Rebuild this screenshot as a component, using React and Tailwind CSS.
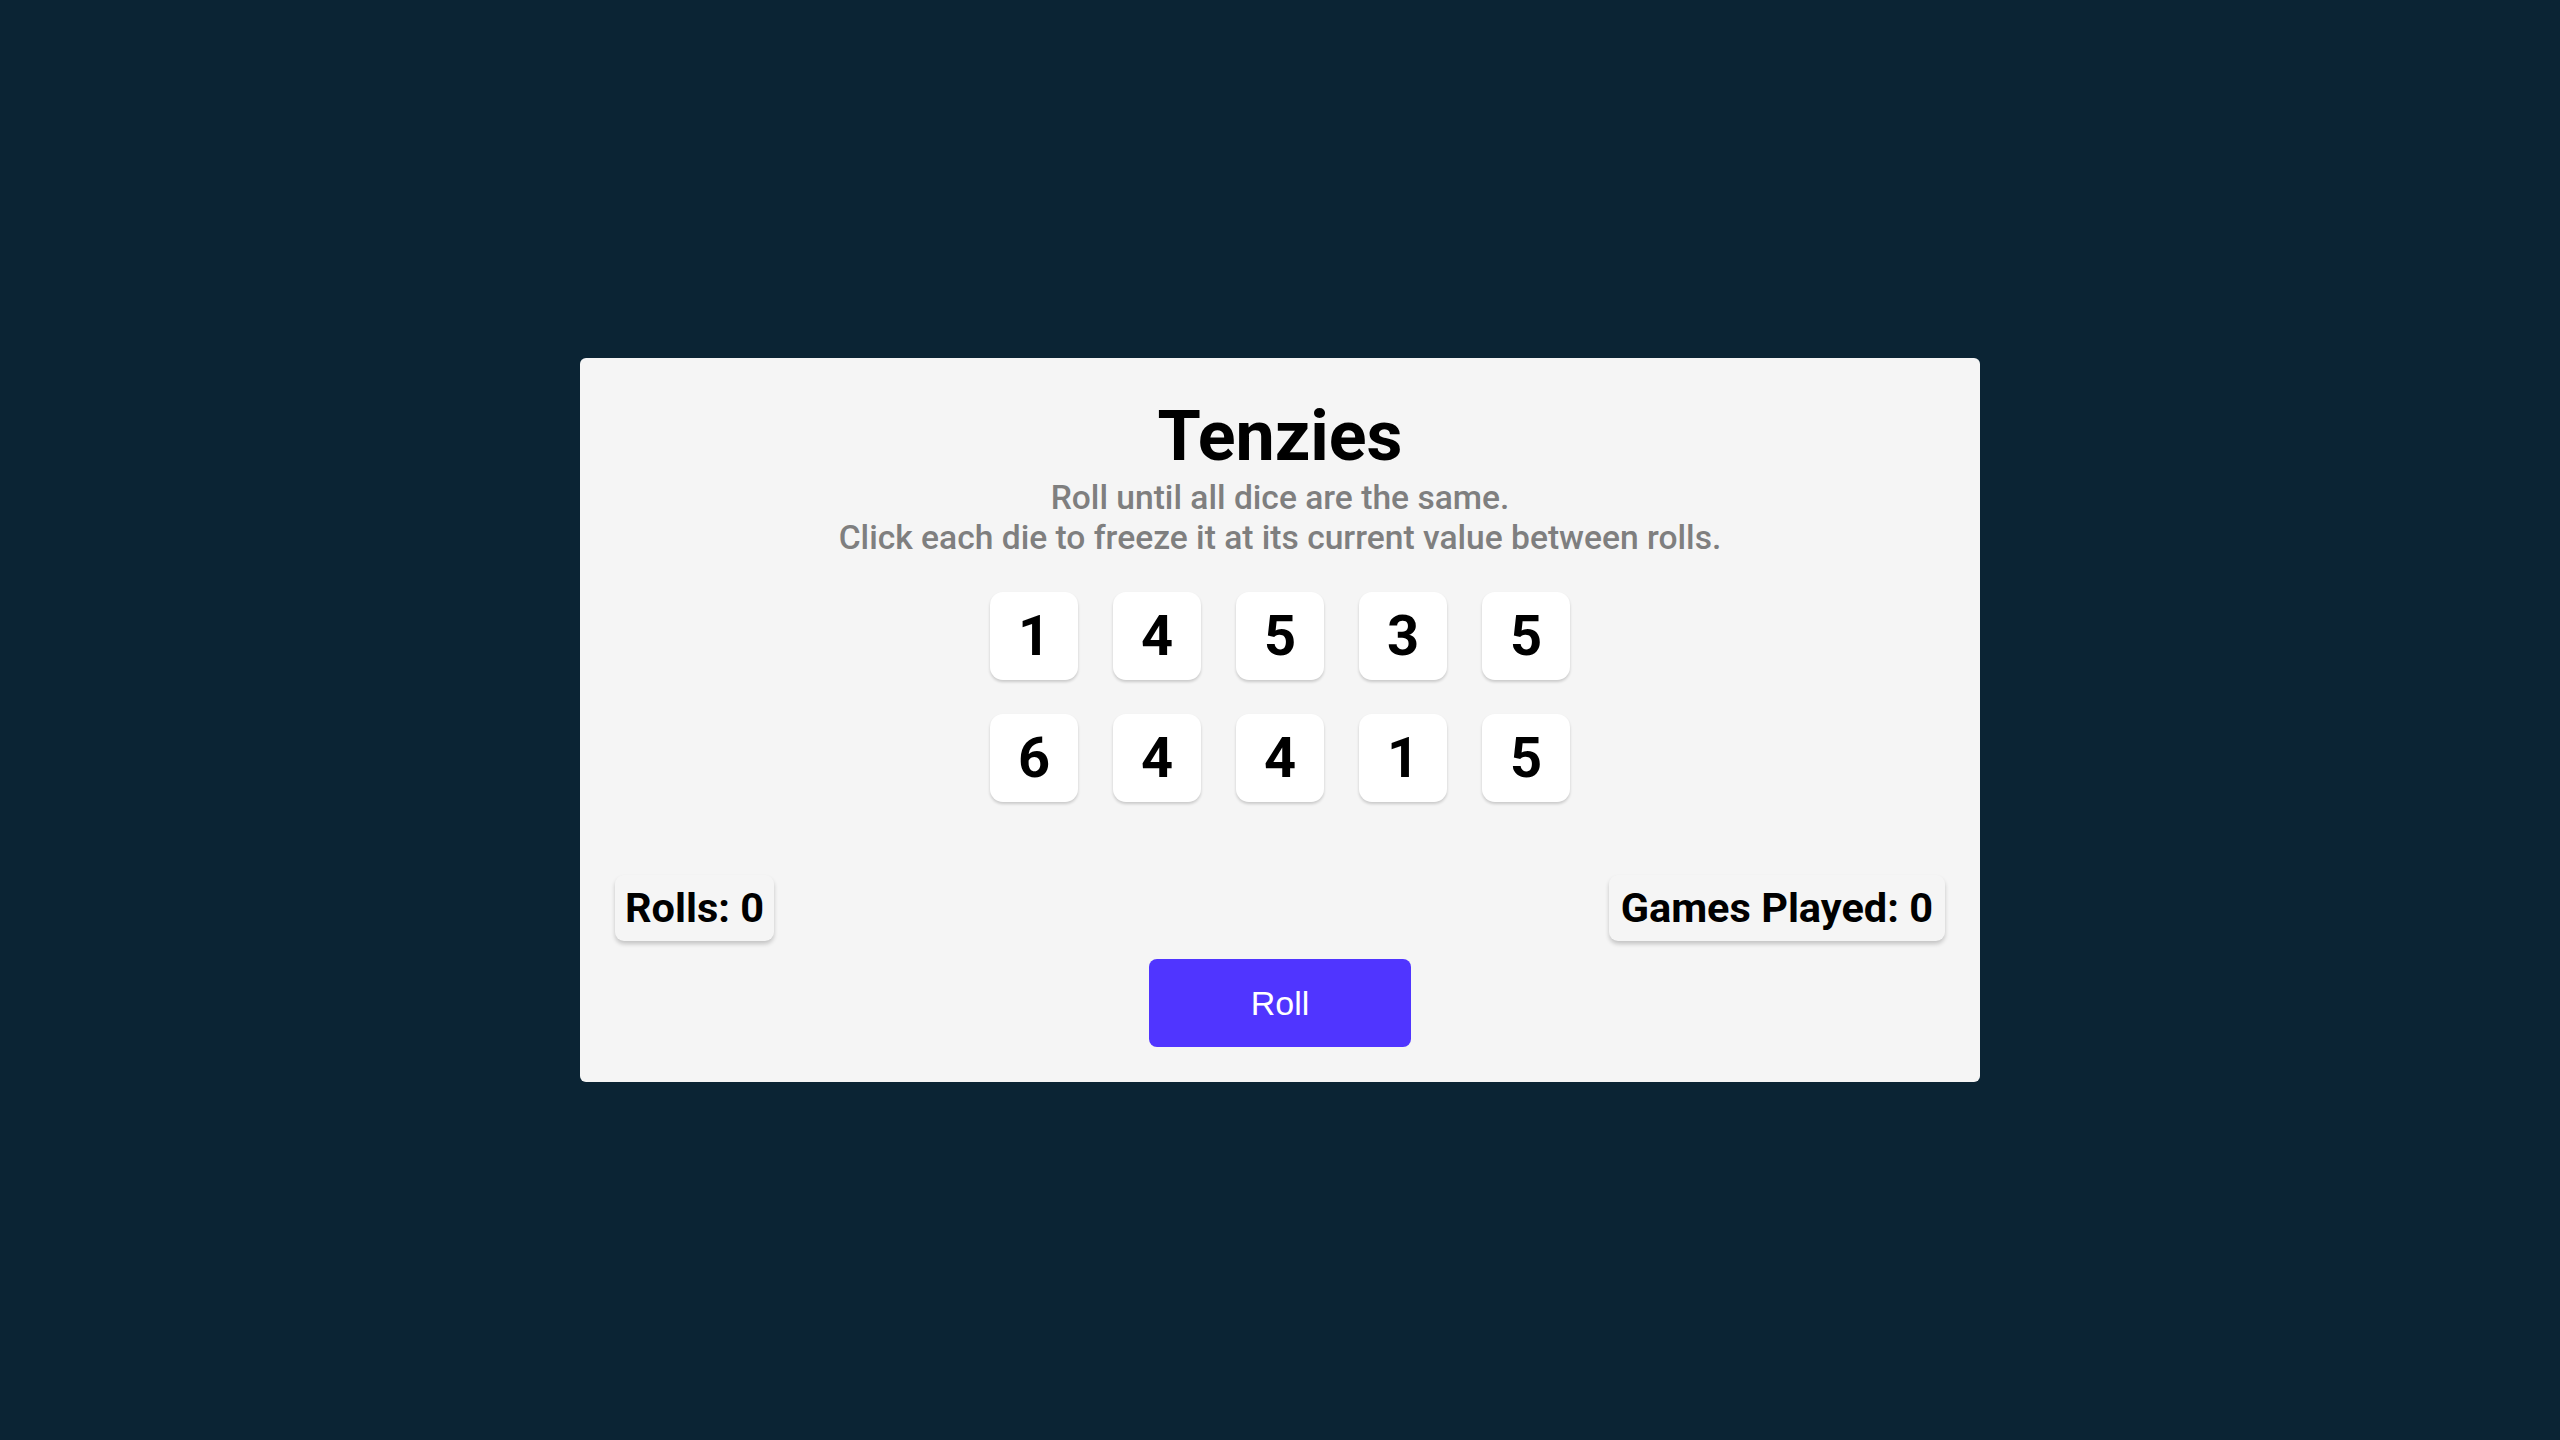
import React from "react";

const dice = [1, 4, 5, 3, 5, 6, 4, 4, 1, 5];

export default function App() {
  return (
    <div
      className="min-h-screen w-full bg-[#0B2434] flex items-center justify-center"
      style={{ fontFamily: "Roboto, 'Liberation Sans', sans-serif" }}
    >
      <main className="w-[1400px] bg-[#f5f5f5] rounded-[6px] px-[35px] pt-[36px] pb-[35px] flex flex-col items-center">
        <h1 className="text-[70px] font-bold text-black leading-[84px] m-0">Tenzies</h1>
        <p className="text-[33.6px] font-medium text-[#7f7f7f] text-center leading-[40px] m-0">
          Roll until all dice are the same.
          <br />
          Click each die to freeze it at its current value between rolls.
        </p>
        <div className="grid grid-cols-5 gap-x-[35px] gap-y-[34px] mt-[34px]">
          {dice.map((d, i) => (
            <button
              key={i}
              className="w-[88px] h-[88px] bg-white rounded-[13px] shadow-[0_2px_3px_rgba(0,0,0,0.18)] flex items-center justify-center text-[56px] font-bold text-black leading-none"
              style={{ fontFamily: "Roboto, sans-serif" }}
            >
              {d}
            </button>
          ))}
        </div>
        <div className="w-full flex justify-between items-center mt-[73px]">
          <div className="bg-[#f5f5f5] rounded-[9px] shadow-[0_3px_4px_rgba(0,0,0,0.2)] px-[10px] py-[7px] text-[41.5px] font-bold text-black leading-[52px]">
            Rolls: 0
          </div>
          <div className="bg-[#f5f5f5] rounded-[9px] shadow-[0_3px_4px_rgba(0,0,0,0.2)] px-[12px] py-[7px] text-[41.5px] font-bold text-black leading-[52px]">
            Games Played: 0
          </div>
        </div>
        <button
          className="mt-[18px] w-[262px] h-[88px] bg-[#5035FF] rounded-[8px] text-white text-[34px] flex items-center justify-center"
          style={{ fontFamily: "'Liberation Sans', Arial, sans-serif" }}
        >
          Roll
        </button>
      </main>
    </div>
  );
}
